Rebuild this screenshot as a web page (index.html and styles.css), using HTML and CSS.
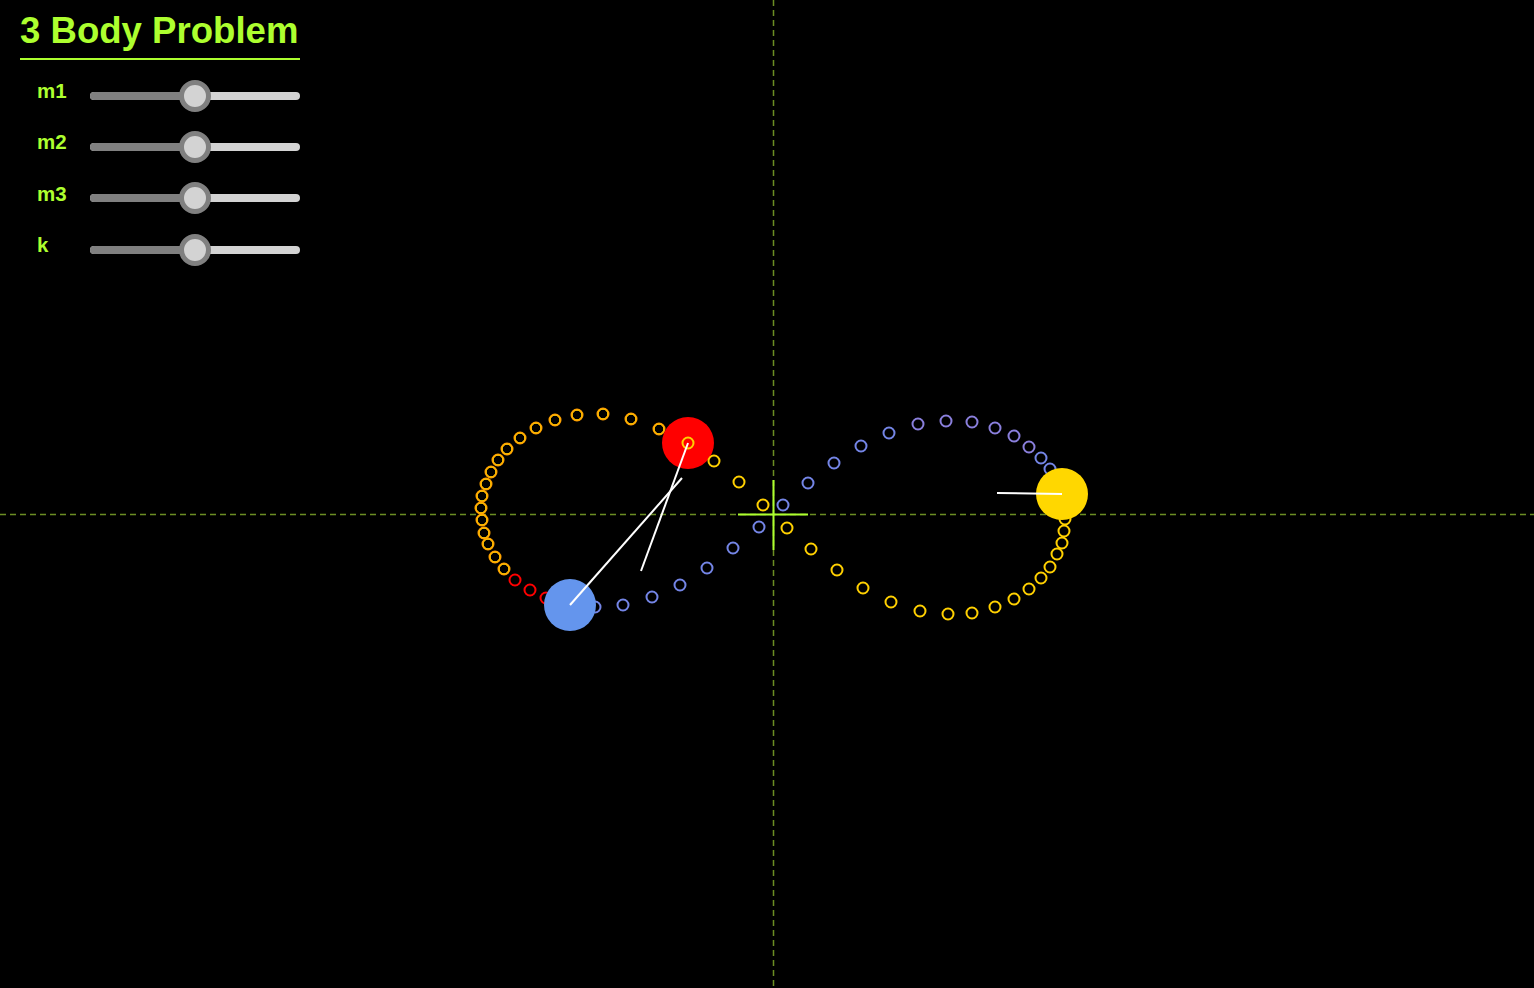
FILE: index.html
```html
<!DOCTYPE html>
<html>
<head>
<meta charset="utf-8">
<title>3 Body Problem</title>
<link rel="stylesheet" href="styles.css">
</head>
<body>
<svg class="canvas" width="1534" height="988" viewBox="0 0 1534 988" xmlns="http://www.w3.org/2000/svg">
  <g class="axes">
    <line x1="0" y1="514.5" x2="1534" y2="514.5"/>
    <line x1="773.5" y1="0" x2="773.5" y2="988"/>
  </g>
  <g class="origin">
    <line x1="738" y1="514.5" x2="808" y2="514.5"/>
    <line x1="773.5" y1="480" x2="773.5" y2="550"/>
  </g>
  <g class="trail-orange">
    <circle cx="659" cy="429" r="5.5"/><circle cx="631" cy="419" r="5.5"/><circle cx="603" cy="414" r="5.5"/>
    <circle cx="577" cy="415" r="5.5"/><circle cx="555" cy="420" r="5.5"/><circle cx="536" cy="428" r="5.5"/>
    <circle cx="520" cy="438" r="5.5"/><circle cx="507" cy="449" r="5.5"/><circle cx="498" cy="460" r="5.5"/>
    <circle cx="491" cy="472" r="5.5"/><circle cx="486" cy="484" r="5.5"/><circle cx="482" cy="496" r="5.5"/>
    <circle cx="481" cy="508" r="5.5"/><circle cx="482" cy="520" r="5.5"/><circle cx="484" cy="533" r="5.5"/>
    <circle cx="488" cy="544" r="5.5"/><circle cx="495" cy="557" r="5.5"/><circle cx="504" cy="569" r="5.5"/>
  </g>
  <g class="trail-orange-inner">
    <circle cx="659" cy="429" r="4.8"/><circle cx="631" cy="419" r="4.8"/><circle cx="603" cy="414" r="4.8"/>
    <circle cx="577" cy="415" r="4.8"/><circle cx="555" cy="420" r="4.8"/><circle cx="536" cy="428" r="4.8"/>
    <circle cx="520" cy="438" r="4.8"/><circle cx="507" cy="449" r="4.8"/><circle cx="498" cy="460" r="4.8"/>
    <circle cx="491" cy="472" r="4.8"/><circle cx="486" cy="484" r="4.8"/><circle cx="482" cy="496" r="4.8"/>
    <circle cx="481" cy="508" r="4.8"/><circle cx="482" cy="520" r="4.8"/><circle cx="484" cy="533" r="4.8"/>
    <circle cx="488" cy="544" r="4.8"/><circle cx="495" cy="557" r="4.8"/><circle cx="504" cy="569" r="4.8"/>
  </g>
  <g class="trail-red">
    <circle cx="515" cy="580" r="5.5"/><circle cx="530" cy="590" r="5.5"/><circle cx="546" cy="598" r="5.5"/>
  </g>
  <circle class="body-red" cx="688" cy="443" r="26"/>
  <g class="trail-yellow">
    <circle cx="688" cy="443" r="5.5"/><circle cx="714" cy="461" r="5.5"/><circle cx="739" cy="482" r="5.5"/>
    <circle cx="763" cy="505" r="5.5"/><circle cx="787" cy="528" r="5.5"/><circle cx="811" cy="549" r="5.5"/>
    <circle cx="837" cy="570" r="5.5"/><circle cx="863" cy="588" r="5.5"/><circle cx="891" cy="602" r="5.5"/>
    <circle cx="920" cy="611" r="5.5"/><circle cx="948" cy="614" r="5.5"/><circle cx="972" cy="613" r="5.5"/>
    <circle cx="995" cy="607" r="5.5"/><circle cx="1014" cy="599" r="5.5"/><circle cx="1029" cy="589" r="5.5"/>
    <circle cx="1041" cy="578" r="5.5"/><circle cx="1050" cy="567" r="5.5"/><circle cx="1057" cy="554" r="5.5"/>
    <circle cx="1062" cy="543" r="5.5"/><circle cx="1064" cy="531" r="5.5"/><circle cx="1065" cy="519" r="5.5"/>
    <circle cx="1065" cy="507" r="5.5"/>
  </g>
  <g class="trail-blue">
    <circle cx="595" cy="607" r="5.5"/><circle cx="623" cy="605" r="5.5"/><circle cx="652" cy="597" r="5.5"/>
    <circle cx="680" cy="585" r="5.5"/><circle cx="707" cy="568" r="5.5"/><circle cx="733" cy="548" r="5.5"/>
    <circle cx="759" cy="527" r="5.5"/><circle cx="783" cy="505" r="5.5"/><circle cx="808" cy="483" r="5.5"/>
    <circle cx="834" cy="463" r="5.5"/><circle cx="861" cy="446" r="5.5"/><circle cx="889" cy="433" r="5.5"/>
  </g>
  <g class="trail-violet">
    <circle cx="918" cy="424" r="5.5"/><circle cx="946" cy="421" r="5.5"/><circle cx="972" cy="422" r="5.5"/>
    <circle cx="995" cy="428" r="5.5"/><circle cx="1014" cy="436" r="5.5"/><circle cx="1029" cy="447" r="5.5"/>
  </g>
  <g class="trail-blue">
    <circle cx="1041" cy="458" r="5.5"/><circle cx="1050" cy="469" r="5.5"/>
  </g>
  <circle class="body-blue" cx="570" cy="605" r="26"/>
  <circle class="body-yellow" cx="1062" cy="494" r="26"/>
  <g class="vectors">
    <line x1="688" y1="443" x2="641" y2="571"/>
    <line x1="570" y1="605" x2="682" y2="478"/>
    <line x1="1062" y1="494" x2="997" y2="493"/>
  </g>
</svg>

<main class="panel">
  <h1 class="title">3 Body Problem</h1>
  <div class="controls">
    <div class="row">
      <span class="label">m1</span>
      <div class="slider"><div class="track"><div class="fill" style="width:50%"></div></div><div class="thumb" style="left:50%"></div></div>
    </div>
    <div class="row">
      <span class="label">m2</span>
      <div class="slider"><div class="track"><div class="fill" style="width:50%"></div></div><div class="thumb" style="left:50%"></div></div>
    </div>
    <div class="row">
      <span class="label">m3</span>
      <div class="slider"><div class="track"><div class="fill" style="width:50%"></div></div><div class="thumb" style="left:50%"></div></div>
    </div>
    <div class="row">
      <span class="label">k</span>
      <div class="slider"><div class="track"><div class="fill" style="width:50%"></div></div><div class="thumb" style="left:50%"></div></div>
    </div>
  </div>
</main>
</body>
</html>
```

FILE: styles.css
```css
html, body {
  margin: 0;
  padding: 0;
  background: #000;
  width: 1534px;
  height: 988px;
  overflow: hidden;
  font-family: "Liberation Sans", Arial, sans-serif;
}

.canvas {
  position: absolute;
  left: 0;
  top: 0;
  display: block;
}

.axes line {
  stroke: #6b8e23;
  stroke-width: 1.5;
  stroke-dasharray: 6 4;
}

.origin line {
  stroke: #adff2f;
  stroke-width: 2;
}

.trail-orange circle { fill: none; stroke: #ffa000; stroke-width: 2; }
.trail-orange-inner circle { fill: none; stroke: #ffc800; stroke-width: 1; }
.trail-red circle { fill: none; stroke: #ff0000; stroke-width: 2; }
.trail-yellow circle { fill: none; stroke: #ffd000; stroke-width: 2; }
.trail-blue circle { fill: none; stroke: #7485e6; stroke-width: 2; }
.trail-violet circle { fill: none; stroke: #8a7fdc; stroke-width: 2; }

.body-red { fill: #ff0000; }
.body-blue { fill: #6495ed; }
.body-yellow { fill: #ffd700; }

.vectors line {
  stroke: #ffffff;
  stroke-width: 2;
}

.panel {
  position: relative;
  width: 280px;
  padding-left: 20px;
  color: #adff2f;
}

.title {
  margin: 10px 0 0 0;
  font-size: 36.6px;
  line-height: 42px;
  font-weight: bold;
  padding-bottom: 6px;
  border-bottom: 2px solid #adff2f;
  white-space: nowrap;
}

.controls {
  display: flex;
  flex-direction: column;
  margin-top: 10px;
}

.row {
  display: flex;
  align-items: center;
  height: 51.33px;
}

.label {
  width: 53px;
  margin-left: 17px;
  font-size: 20.5px;
  font-weight: bold;
  line-height: 1;
  margin-bottom: 9px;
}

.slider {
  position: relative;
  width: 210px;
  height: 32px;
  display: flex;
  align-items: center;
}

.track {
  width: 100%;
  height: 8px;
  border-radius: 4px;
  background: #d3d3d3;
  overflow: hidden;
}

.fill {
  height: 100%;
  background: #808080;
}

.thumb {
  position: absolute;
  top: 0;
  width: 22px;
  height: 22px;
  margin-left: -16px;
  border: 5px solid #808080;
  border-radius: 50%;
  background: #d3d3d3;
}
```
